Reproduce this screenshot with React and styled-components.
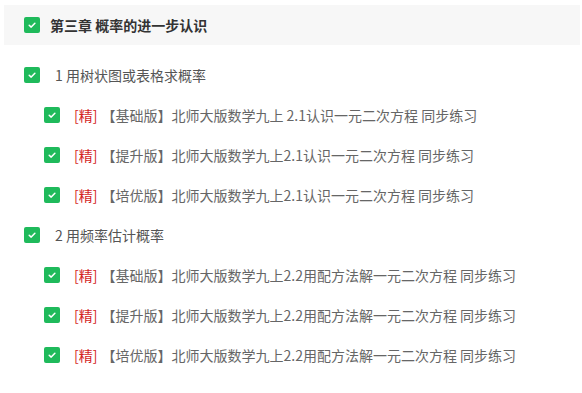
import styled, { createGlobalStyle } from "styled-components";

const GlobalStyle = createGlobalStyle`
  html, body {
    margin: 0;
    padding: 0;
    background: #fff;
    font-family: "Noto Sans CJK SC", "Noto Sans", sans-serif;
  }
`;

const chapter = {
  title: "第三章 概率的进一步认识",
  sections: [
    {
      title: "1 用树状图或表格求概率",
      items: [
        "【基础版】北师大版数学九上 2.1认识一元二次方程 同步练习",
        "【提升版】北师大版数学九上2.1认识一元二次方程 同步练习",
        "【培优版】北师大版数学九上2.1认识一元二次方程 同步练习",
      ],
    },
    {
      title: "2 用频率估计概率",
      items: [
        "【基础版】北师大版数学九上2.2用配方法解一元二次方程 同步练习",
        "【提升版】北师大版数学九上2.2用配方法解一元二次方程 同步练习",
        "【培优版】北师大版数学九上2.2用配方法解一元二次方程 同步练习",
      ],
    },
  ],
};

function Check() {
  return (
    <Box>
      <svg width="10" height="10" viewBox="0 0 10 10">
        <path
          d="M2.2 5.2 L4.2 7.1 L7.9 3.2"
          fill="none"
          stroke="#fff"
          strokeWidth="1.5"
          strokeLinecap="round"
          strokeLinejoin="round"
        />
      </svg>
    </Box>
  );
}

export default function App() {
  return (
    <Page>
      <GlobalStyle />
      <ChapterBar>
        <Check />
        <ChapterTitle>{chapter.title}</ChapterTitle>
      </ChapterBar>
      <List>
        {chapter.sections.map((section) => (
          <Section key={section.title}>
            <Row $level={1}>
              <Check />
              <SectionTitle>{section.title}</SectionTitle>
            </Row>
            {section.items.map((item) => (
              <Row $level={2} key={item}>
                <Check />
                <ItemTitle>
                  <Tag>[精]</Tag>
                  {item}
                </ItemTitle>
              </Row>
            ))}
          </Section>
        ))}
      </List>
    </Page>
  );
}

const Page = styled.div`
  width: 576px;
  padding: 5px 2px 0 4px;
`;

const Box = styled.span`
  width: 16px;
  height: 16px;
  border-radius: 2px;
  background: #1fba5b;
  display: flex;
  align-items: center;
  justify-content: center;
  flex-shrink: 0;
`;

const ChapterBar = styled.div`
  height: 40px;
  background: #f7f7f7;
  display: flex;
  align-items: center;
  padding-left: 20px;
  gap: 10px;
`;

const ChapterTitle = styled.span`
  font-size: 14px;
  font-weight: bold;
  color: #333;
`;

const List = styled.div`
  margin-top: 10px;
  display: flex;
  flex-direction: column;
`;

const Section = styled.div`
  display: flex;
  flex-direction: column;
`;

const Row = styled.div`
  height: 40px;
  display: flex;
  align-items: center;
  padding-left: ${(p) => (p.$level === 1 ? 20 : 40)}px;
  gap: ${(p) => (p.$level === 1 ? 15 : 14)}px;
`;

const SectionTitle = styled.span`
  font-size: 14px;
  color: #555;
`;

const ItemTitle = styled.span`
  font-size: 14px;
  color: #666;
  white-space: nowrap;
`;

const Tag = styled.span`
  color: #d42323;
  margin-right: 4px;
`;
